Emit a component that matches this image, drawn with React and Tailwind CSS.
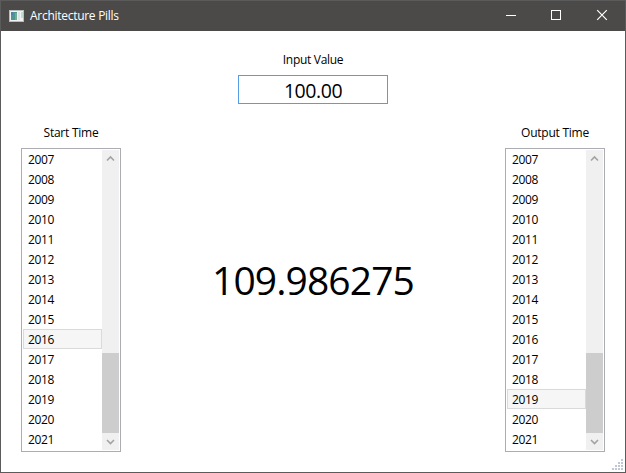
const YEARS = Array.from({ length: 15 }, (_, i) => 2007 + i);

function AppIcon() {
  return (
    <svg width="16" height="14" viewBox="0 0 16 14" shapeRendering="crispEdges">
      <rect x="0" y="0" width="15" height="12" fill="#b9bcbd" />
      <rect x="1" y="1" width="13" height="10" fill="#f1f2f3" />
      <rect x="2" y="2" width="6" height="8" fill="#4f9690" />
      <rect x="2" y="2" width="2" height="3" fill="#4c80a5" />
      <rect x="6" y="3" width="2" height="7" fill="#74ac92" />
      <rect x="9" y="2" width="2" height="8" fill="#dfe3e5" />
      <rect x="12" y="2" width="2" height="6" fill="#c3dcd0" />
    </svg>
  );
}

function TitleBar() {
  return (
    <header className="flex h-[30px] shrink-0 items-center bg-[#4b4a48] text-white">
      <div className="ml-2 mt-px">
        <AppIcon />
      </div>
      <h1 className="ml-[5px] grow whitespace-nowrap text-[12px] leading-4 tracking-[-0.28px]">Architecture Pills</h1>
      <svg width="45" height="30" fill="none" stroke="#fff" shapeRendering="crispEdges">
        <path d="M16 14.5h10" />
      </svg>
      <svg width="45" height="30" fill="none" stroke="#fff" shapeRendering="crispEdges">
        <rect x="16.5" y="9.5" width="9" height="9" />
      </svg>
      <svg width="45" height="30" fill="none" stroke="#fff" strokeWidth="1.2">
        <path d="M17.2 9.2l9.6 9.6M26.8 9.2l-9.6 9.6" />
      </svg>
    </header>
  );
}

function Arrow({ d }) {
  return (
    <svg width="17" height="17" fill="none" stroke="#a3a3a3" strokeWidth="1.6">
      <path d={d} />
    </svg>
  );
}

function YearList({ label, selected }) {
  return (
    <section className="flex w-[100px] flex-col">
      <h2 className="h-[26px] whitespace-nowrap pt-[3px] text-center text-[12px] leading-4 tracking-[-0.25px]">{label}</h2>
      <div className="flex h-[304px] border border-[#abadb3] px-px">
        <ul className="w-[79px]">
          {YEARS.map((year) => (
            <li
              key={year}
              className={
                "flex h-5 items-center border pl-1 pt-[2px] text-[12px] tracking-[-0.4px] " +
                (year === selected ? "border-[#dadada] bg-[#f6f6f6]" : "border-transparent")
              }
            >
              {year}
            </li>
          ))}
        </ul>
        <div className="my-px flex w-[17px] flex-col bg-[#f0f0f0]">
          <Arrow d="M5 10.5l3.5-3.5 3.5 3.5" />
          <div className="mt-auto h-20 bg-[#cdcdcd]" />
          <Arrow d="M5 7l3.5 3.5 3.5-3.5" />
        </div>
      </div>
    </section>
  );
}

function ResizeGrip() {
  const dots = [[9, 0], [6, 3], [9, 3], [3, 6], [6, 6], [9, 6], [0, 9], [3, 9], [6, 9], [9, 9]];
  return (
    <svg className="absolute bottom-[2px] right-[2px]" width="11" height="11" shapeRendering="crispEdges">
      {dots.map(([x, y]) => (
        <rect key={x + "-" + y} x={x} y={y} width="2" height="2" fill="#c1c7d4" />
      ))}
    </svg>
  );
}

export default function App() {
  return (
    <div className="relative flex h-[473px] w-[626px] flex-col overflow-hidden border border-[#5b5b5b] bg-white font-['Open_Sans','Noto_Sans',sans-serif] text-black">
      <TitleBar />
      <main className="flex grow flex-col px-5">
        <div className="flex h-[91px] flex-col items-center pt-[21px]">
          <label className="text-[12px] leading-4 tracking-[-0.3px]">Input Value</label>
          <div className="mt-[7px] flex h-[29px] w-[150px] items-center justify-center border border-[#569de5] pt-[3px] text-[19.5px] leading-none tracking-[-0.45px]">
            100.00
          </div>
        </div>
        <div className="flex justify-between">
          <YearList label="Start Time" selected={2016} />
          <output className="flex grow items-center justify-center pb-[20px] pt-[5px] text-[39px] leading-none tracking-[-0.9px]">
            109.986275
          </output>
          <YearList label="Output Time" selected={2019} />
        </div>
      </main>
      <ResizeGrip />
    </div>
  );
}
